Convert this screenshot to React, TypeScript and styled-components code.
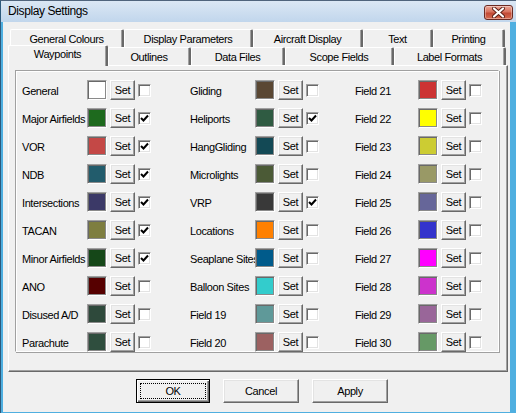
import styled, { createGlobalStyle } from 'styled-components';

const GlobalStyle = createGlobalStyle`
  html, body {
    margin: 0;
    padding: 0;
    background: #f0f0f0;
  }
  * {
    box-sizing: border-box;
  }
`;

const Window = styled.div`
  width: 516px;
  height: 413px;
  display: flex;
  flex-direction: column;
  background: #4fafe0;
  border-top: 1px solid #50647c;
  border-left: 1px solid #2e5a7c;
  font-family: 'Liberation Sans', Arial, sans-serif;
  font-size: 11px;
  letter-spacing: -0.4px;
  color: #000;
  overflow: hidden;
`;

const TitleBar = styled.div`
  height: 21px;
  flex-shrink: 0;
  display: flex;
  align-items: center;
  justify-content: space-between;
  padding: 0 3px 0 7px;
  background: linear-gradient(#dbe7f4, #c1d6ec);
`;

const Title = styled.span`
  font-size: 12px;
  letter-spacing: -0.4px;
  padding-bottom: 1px;
`;

const CloseButton = styled.div`
  width: 29px;
  height: 15px;
  margin-top: 1px;
  display: flex;
  align-items: center;
  justify-content: center;
  border: 1px solid #6b2a22;
  border-radius: 3px;
  background: linear-gradient(#eba696 0%, #d8735f 45%, #c24a36 55%, #d66c52 100%);
  box-shadow: inset 0 0 0 1px rgba(255, 255, 255, 0.35);
`;

const Client = styled.div`
  flex: 1;
  margin: 0 6px 1px 2px;
  background: #f0f0f0;
  display: flex;
  flex-direction: column;
  padding: 7px 0 0 5px;
`;

const TabRow = styled.div<{ $inset: number }>`
  display: flex;
  height: 18px;
  padding-left: ${(p) => p.$inset}px;
  align-items: flex-end;
`;

const Tab = styled.div<{ $w: number; $active?: boolean }>`
  width: ${(p) => p.$w}px;
  height: ${(p) => (p.$active ? 21 : 18)}px;
  margin-bottom: ${(p) => (p.$active ? -1 : 0)}px;
  position: relative;
  z-index: ${(p) => (p.$active ? 2 : 1)};
  display: flex;
  justify-content: center;
  padding-top: ${(p) => (p.$active ? 2 : 3)}px;
  background: #f0f0f0;
  border-top: 1px solid #fff;
  border-left: 1px solid #fff;
  border-right: 2px solid #696969;
  border-right-color: #696969;
  box-shadow: inset -1px 0 0 #a0a0a0;
  border-radius: 2px 2px 0 0;
  white-space: nowrap;
`;

const Panel = styled.div`
  width: 500px;
  height: 307px;
  display: flex;
  padding: 4px 0 0 6px;
  border-top: 1px solid #fff;
  border-left: 1px solid #fff;
  border-right: 1px solid #696969;
  border-bottom: 1px solid #696969;
  box-shadow: inset -1px -1px 0 #a0a0a0;
`;

const GroupBox = styled.div`
  width: 484px;
  height: 282px;
  border-top: 1px solid #a0a0a0;
  border-left: 1px solid #a0a0a0;
  border-right: 1px solid #fff;
  border-bottom: 1px solid #fff;
  box-shadow: inset 1px 1px 0 #fff, 1px 1px 0 #a0a0a0;
  padding: 9px 0 0 6px;
`;

const Grid = styled.div`
  display: grid;
  grid-auto-flow: column;
  grid-template-rows: repeat(10, 20px);
  grid-template-columns: 168px 165px 130px;
  row-gap: 8px;
`;

const Row = styled.div`
  display: flex;
  align-items: center;
`;

const Label = styled.span<{ $w: number }>`
  width: ${(p) => p.$w}px;
  flex-shrink: 0;
  white-space: nowrap;
  padding-top: 1px;
`;

const Swatch = styled.div<{ $color: string }>`
  width: 20px;
  height: 20px;
  flex-shrink: 0;
  background: ${(p) => p.$color};
  border: 1px solid;
  border-color: #a0a0a0 #fff #fff #a0a0a0;
  box-shadow: inset 1px 1px 0 #696969, inset -1px -1px 0 #8a8a8a;
`;

const SetButton = styled.div`
  width: 25px;
  height: 20px;
  margin-left: 3px;
  flex-shrink: 0;
  display: flex;
  align-items: center;
  justify-content: center;
  background: #f0f0f0;
  border: 1px solid;
  border-color: #fff #696969 #696969 #fff;
  box-shadow: inset -1px -1px 0 #a0a0a0, inset 1px 1px 0 #e3e3e3;
  padding-bottom: 1px;
`;

const CheckBox = styled.div`
  width: 13px;
  height: 13px;
  margin-left: 3px;
  flex-shrink: 0;
  display: flex;
  align-items: center;
  justify-content: center;
  background: #fff;
  border: 1px solid;
  border-color: #a0a0a0 #fff #fff #a0a0a0;
  box-shadow: inset 1px 1px 0 #696969, inset -1px -1px 0 #e3e3e3;
`;

const ButtonBar = styled.div`
  display: flex;
  gap: 13px;
  margin: 7px 0 0 128px;
`;

const DialogButton = styled.div<{ $default?: boolean }>`
  width: ${(p) => (p.$default ? 74 : 76)}px;
  height: 24px;
  display: flex;
  align-items: center;
  justify-content: center;
  position: relative;
  background: #f0f0f0;
  border: 1px solid;
  border-color: ${(p) => (p.$default ? '#000' : '#fff #696969 #696969 #fff')};
  box-shadow: ${(p) =>
    p.$default
      ? 'inset 1px 1px 0 #fff, inset -1px -1px 0 #696969, inset -2px -2px 0 #a0a0a0'
      : 'inset -1px -1px 0 #a0a0a0, inset 1px 1px 0 #e3e3e3'};
`;

const FocusRing = styled.span`
  position: absolute;
  inset: 3px;
  border: 1px dotted #000;
`;

const topTabs = [
  { label: 'General Colours', w: 114 },
  { label: 'Display Parameters', w: 129 },
  { label: 'Aircraft Display', w: 110 },
  { label: 'Text', w: 70 },
  { label: 'Printing', w: 72 },
];

const bottomTabs = [
  { label: 'Waypoints', w: 100, active: true },
  { label: 'Outlines', w: 83 },
  { label: 'Data Files', w: 94 },
  { label: 'Scope Fields', w: 109 },
  { label: 'Label Formats', w: 112 },
];

type Item = { label: string; color: string; checked?: boolean };

const columns: { labelWidth: number; items: Item[] }[] = [
  {
    labelWidth: 65,
    items: [
      { label: 'General', color: '#ffffff' },
      { label: 'Major Airfields', color: '#1e6a1e', checked: true },
      { label: 'VOR', color: '#c44846', checked: true },
      { label: 'NDB', color: '#225c6c', checked: true },
      { label: 'Intersections', color: '#3b3967', checked: true },
      { label: 'TACAN', color: '#7e7e40', checked: true },
      { label: 'Minor Airfields', color: '#154718', checked: true },
      { label: 'ANO', color: '#560000' },
      { label: 'Disused A/D', color: '#2e493b' },
      { label: 'Parachute', color: '#2f4e3e' },
    ],
  },
  {
    labelWidth: 65,
    items: [
      { label: 'Gliding', color: '#5a4733' },
      { label: 'Heliports', color: '#2f5b42', checked: true },
      { label: 'HangGliding', color: '#134955' },
      { label: 'Microlights', color: '#4b5a36' },
      { label: 'VRP', color: '#393939', checked: true },
      { label: 'Locations', color: '#ff8000' },
      { label: 'Seaplane Sites', color: '#005b8b' },
      { label: 'Balloon Sites', color: '#33cccc' },
      { label: 'Field 19', color: '#5f9999' },
      { label: 'Field 20', color: '#9c6161' },
    ],
  },
  {
    labelWidth: 63,
    items: [
      { label: 'Field 21', color: '#cc3333' },
      { label: 'Field 22', color: '#ffff00' },
      { label: 'Field 23', color: '#cccc33' },
      { label: 'Field 24', color: '#999966' },
      { label: 'Field 25', color: '#666699' },
      { label: 'Field 26', color: '#3333cc' },
      { label: 'Field 27', color: '#ff00ff' },
      { label: 'Field 28', color: '#cc33cc' },
      { label: 'Field 29', color: '#996699' },
      { label: 'Field 30', color: '#669966' },
    ],
  },
];

const CheckMark = () => (
  <svg width='9' height='9' viewBox='0 0 9 9'>
    <polyline
      points='1,4 3.5,6.5 8,1.5'
      fill='none'
      stroke='#000'
      strokeWidth='2'
    />
  </svg>
);

const CloseGlyph = () => (
  <svg width='13' height='11' viewBox='0 0 13 11'>
    <path
      d='M2 1.5 L11 9.5 M11 1.5 L2 9.5'
      stroke='#5a1d14'
      strokeWidth='4'
      strokeLinecap='round'
    />
    <path
      d='M2 1.5 L11 9.5 M11 1.5 L2 9.5'
      stroke='#fff'
      strokeWidth='2.2'
      strokeLinecap='round'
    />
  </svg>
);

const App = () => {
  return (
    <>
      <GlobalStyle />
      <Window>
        <TitleBar>
          <Title>Display Settings</Title>
          <CloseButton>
            <CloseGlyph />
          </CloseButton>
        </TitleBar>

        <Client>
          <TabRow $inset={2}>
            {topTabs.map((tab) => (
              <Tab key={tab.label} $w={tab.w}>
                {tab.label}
              </Tab>
            ))}
          </TabRow>
          <TabRow $inset={0}>
            {bottomTabs.map((tab) => (
              <Tab key={tab.label} $w={tab.w} $active={tab.active}>
                {tab.label}
              </Tab>
            ))}
          </TabRow>

          <Panel>
            <GroupBox>
              <Grid>
                {columns.map((col) =>
                  col.items.map((item) => (
                    <Row key={item.label}>
                      <Label $w={col.labelWidth}>{item.label}</Label>
                      <Swatch $color={item.color} />
                      <SetButton>Set</SetButton>
                      <CheckBox>{item.checked && <CheckMark />}</CheckBox>
                    </Row>
                  ))
                )}
              </Grid>
            </GroupBox>
          </Panel>

          {/* 확인 / 취소 / 적용 */}
          <ButtonBar>
            <DialogButton $default>
              OK
              <FocusRing />
            </DialogButton>
            <DialogButton>Cancel</DialogButton>
            <DialogButton>Apply</DialogButton>
          </ButtonBar>
        </Client>
      </Window>
    </>
  );
};

export default App;
